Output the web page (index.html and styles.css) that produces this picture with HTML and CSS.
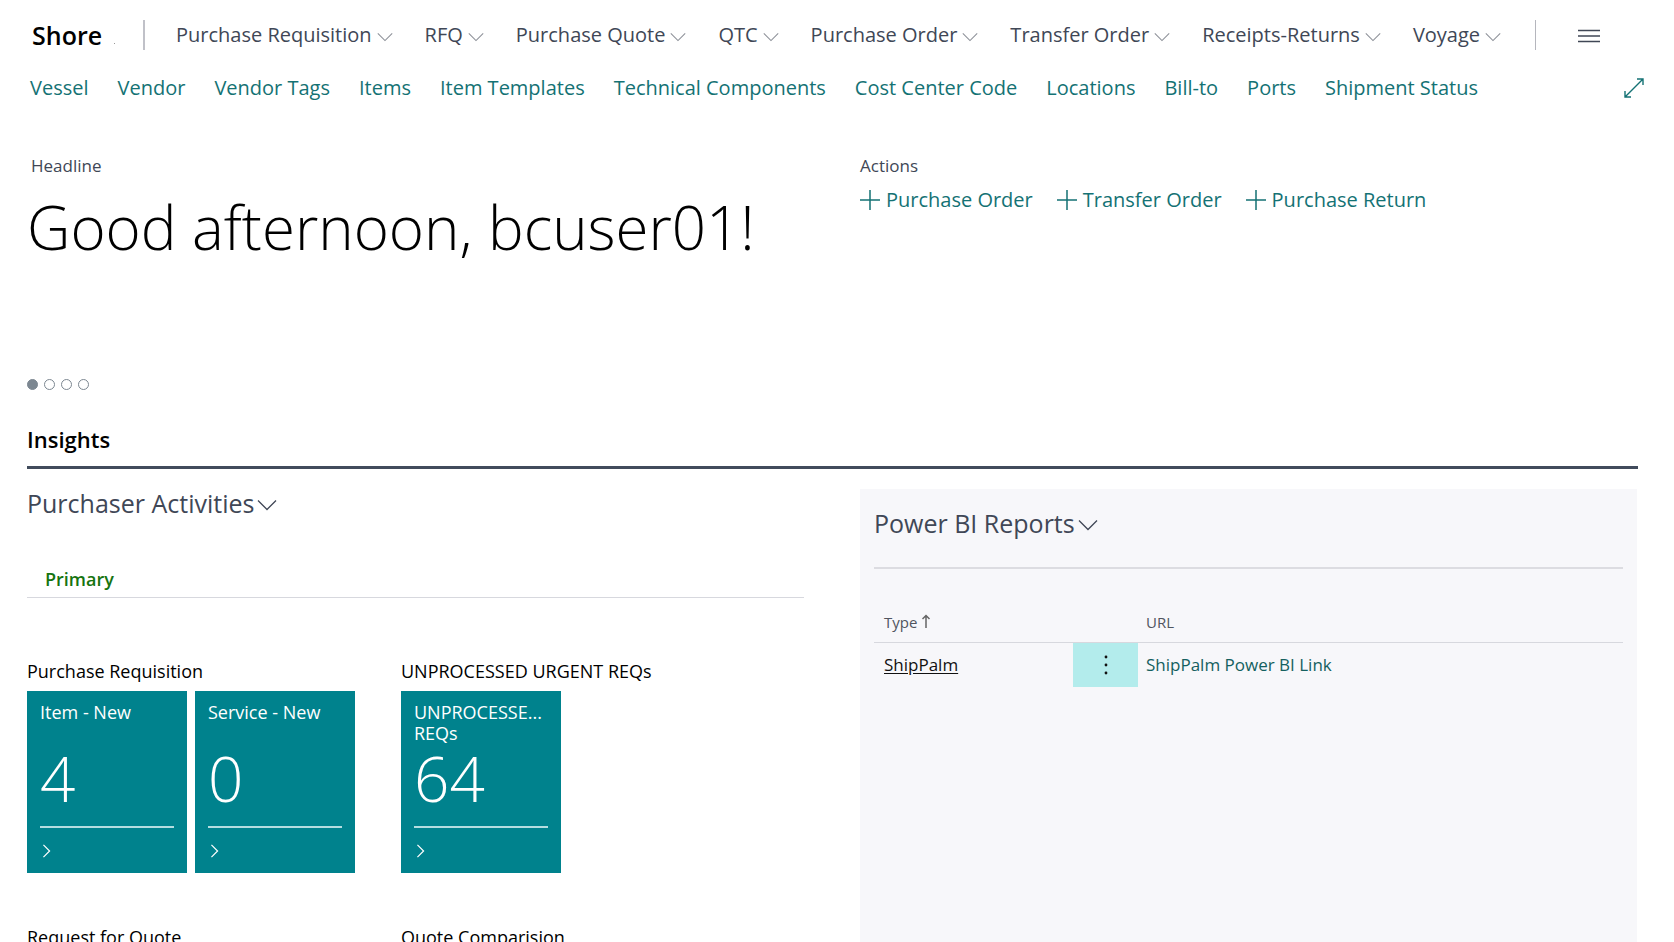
FILE: index.html
```html
<!DOCTYPE html>
<html lang="en">
<head>
<meta charset="utf-8">
<title>Shore - Role Center</title>
<link rel="stylesheet" href="styles.css">
</head>
<body>
<svg class="symbols" aria-hidden="true">
  <symbol id="chevron-down" viewBox="0 0 20 12"><path d="M1 1.5l9 9 9-9" fill="none" stroke="currentColor" stroke-width="1.3"/></symbol>
  <symbol id="chevron-right" viewBox="0 0 9 16"><path d="M1 1l7 7-7 7" fill="none" stroke="currentColor" stroke-width="1.4"/></symbol>
  <symbol id="plus" viewBox="0 0 20 20"><path d="M10 0v20M0 10h20" fill="none" stroke="currentColor" stroke-width="1.5"/></symbol>
</svg>
<header class="top">
  <nav class="menu" aria-label="Main">
    <div class="brand"><a class="brand-name" href="#">Shore</a><span class="brand-dot"></span></div>
    <div class="menu-items">
      <button class="menu-item" type="button">Purchase Requisition<svg class="menu-chevron"><use href="#chevron-down"/></svg></button>
      <button class="menu-item" type="button">RFQ<svg class="menu-chevron"><use href="#chevron-down"/></svg></button>
      <button class="menu-item" type="button">Purchase Quote<svg class="menu-chevron"><use href="#chevron-down"/></svg></button>
      <button class="menu-item" type="button">QTC<svg class="menu-chevron"><use href="#chevron-down"/></svg></button>
      <button class="menu-item" type="button">Purchase Order<svg class="menu-chevron"><use href="#chevron-down"/></svg></button>
      <button class="menu-item" type="button">Transfer Order<svg class="menu-chevron"><use href="#chevron-down"/></svg></button>
      <button class="menu-item" type="button">Receipts-Returns<svg class="menu-chevron"><use href="#chevron-down"/></svg></button>
      <button class="menu-item" type="button">Voyage<svg class="menu-chevron"><use href="#chevron-down"/></svg></button>
    </div>
    <button class="burger" type="button" aria-label="More"><svg viewBox="0 0 22 14" width="22" height="14"><path d="M0 1.500h22M0 7h22M0 12.500h22" stroke="currentColor" stroke-width="1.6"/></svg></button>
  </nav>
  <nav class="links" aria-label="Lists">
    <a href="#">Vessel</a>
    <a href="#">Vendor</a>
    <a href="#">Vendor Tags</a>
    <a href="#">Items</a>
    <a href="#">Item Templates</a>
    <a href="#">Technical Components</a>
    <a href="#">Cost Center Code</a>
    <a href="#">Locations</a>
    <a href="#">Bill-to</a>
    <a href="#">Ports</a>
    <a href="#">Shipment Status</a>
    <button class="expand" type="button" aria-label="Expand"><svg viewBox="0 0 20 20" width="20" height="20"><path d="M1 19L19 1M13 1h6v6M1 13v6h6" fill="none" stroke="currentColor" stroke-width="1.4"/></svg></button>
  </nav>
</header>
<main class="content">
  <div class="columns intro">
    <section class="headline">
      <h2 class="label headline-label">Headline</h2>
      <h1 class="greeting">Good afternoon, bcuser01!</h1>
      <div class="dots">
        <button class="dot dot-current" type="button" aria-label="Headline 1"></button>
        <button class="dot" type="button" aria-label="Headline 2"></button>
        <button class="dot" type="button" aria-label="Headline 3"></button>
        <button class="dot" type="button" aria-label="Headline 4"></button>
      </div>
    </section>
    <section>
      <h2 class="label">Actions</h2>
      <div class="actions">
        <a class="action" href="#"><svg class="plus"><use href="#plus"/></svg>Purchase Order</a>
        <a class="action" href="#"><svg class="plus"><use href="#plus"/></svg>Transfer Order</a>
        <a class="action" href="#"><svg class="plus"><use href="#plus"/></svg>Purchase Return</a>
      </div>
    </section>
  </div>
  <h2 class="insights">Insights</h2>
  <div class="columns parts">
    <section class="activities">
      <h3><button class="part-title" type="button">Purchaser Activities<svg class="part-chevron"><use href="#chevron-down"/></svg></button></h3>
      <h4 class="primary">Primary</h4>
      <div class="groups">
        <section>
          <h5 class="group-title">Purchase Requisition</h5>
          <div class="tiles">
            <a class="tile" href="#"><span class="tile-name">Item - New</span><span class="tile-value">4</span><svg class="tile-arrow"><use href="#chevron-right"/></svg></a>
            <a class="tile" href="#"><span class="tile-name">Service - New</span><span class="tile-value">0</span><svg class="tile-arrow"><use href="#chevron-right"/></svg></a>
          </div>
        </section>
        <section>
          <h5 class="group-title">UNPROCESSED URGENT REQs</h5>
          <div class="tiles">
            <a class="tile" href="#"><span class="tile-name">UNPROCESSE...<br>REQs</span><span class="tile-value">64</span><svg class="tile-arrow"><use href="#chevron-right"/></svg></a>
          </div>
        </section>
        <section><h5 class="group-title">Request for Quote</h5></section>
        <section><h5 class="group-title">Quote Comparision</h5></section>
      </div>
    </section>
    <section class="reports">
      <h3><button class="part-title" type="button">Power BI Reports<svg class="part-chevron"><use href="#chevron-down"/></svg></button></h3>
      <table class="table">
        <thead>
          <tr><th class="col-type" scope="col">Type<svg class="sort" viewBox="0 0 10 14" width="10" height="14"><path d="M5 14V1.500M1.500 5L5 1.500 8.500 5" fill="none" stroke="currentColor" stroke-width="1.5"/></svg></th><th class="col-menu"></th><th scope="col">URL</th></tr>
        </thead>
        <tbody>
          <tr>
            <td class="col-type"><a class="type-link" href="#">ShipPalm</a></td>
            <td class="col-menu"><button class="row-menu" type="button" aria-label="Row options"><svg viewBox="0 0 4 20" width="4" height="20"><g fill="currentColor"><circle cx="2" cy="2" r="1.4"/><circle cx="2" cy="10" r="1.4"/><circle cx="2" cy="18" r="1.4"/></g></svg></button></td>
            <td><a class="url-link" href="#">ShipPalm Power BI Link</a></td>
          </tr>
        </tbody>
      </table>
    </section>
  </div>
</main>
</body>
</html>
```
FILE: styles.css
```css
:root {
  --ink: #404756;
  --teal: #147274;
  --tile: #00828d;
  --rule: #d7d8de;
}

* { box-sizing: border-box; }

body {
  display: flex;
  flex-direction: column;
  height: 100vh;
  margin: 0;
  overflow: hidden;
  background: #fff;
  color: #111;
  font-family: "Open Sans", "Noto Sans", sans-serif;
  font-size: 20px;
  font-weight: 400;
  line-height: 30px;
}

h1, h2, h3, h4, h5 { margin: 0; font: inherit; }
a { color: inherit; text-decoration: none; }
button {
  padding: 0;
  border: 0;
  background: none;
  color: inherit;
  font: inherit;
  cursor: pointer;
}
svg { display: block; flex: none; }
.symbols { position: absolute; width: 0; height: 0; }

.top { padding: 20px 30px 0; white-space: nowrap; }
.menu { display: flex; color: var(--ink); }
.brand {
  display: flex;
  align-items: center;
  width: 115px;
  padding-left: 2px;
  border-right: 2px solid #c0c1c8;
}
.brand-name { color: #000; font-size: 25px; font-weight: 600; }
.brand-dot { width: 1px; height: 1px; margin: 16px 0 0 12px; background: #999; }
.menu-items {
  display: flex;
  gap: 32px;
  padding: 0 34px 0 31px;
  border-right: 1px solid #b5b6bd;
}
.menu-item { display: flex; align-items: center; gap: 5px; }
.menu-chevron { width: 16px; height: 10px; margin-top: 4px; color: #8c9098; }
.burger { margin-left: 42px; padding-top: 2px; }

.links { display: flex; gap: 29px; margin-top: 23px; color: var(--teal); }
.expand { display: flex; align-items: center; margin-left: auto; }

.content { flex: 1; padding: 51px 36px 0 27px; }
.columns {
  display: grid;
  grid-template-columns: 1fr 1fr;
  column-gap: 56px;
  padding-right: 1px;
}
.intro { height: 270px; }
.headline { display: flex; flex-direction: column; }
.label { color: var(--ink); font-size: 17px; line-height: 24px; }
.headline-label { padding-left: 4px; }
.greeting {
  margin-top: 9px;
  color: #000;
  font-size: 60px;
  font-weight: 300;
  line-height: 80px;
  white-space: nowrap;
}
.dots { display: flex; gap: 6px; margin-top: 112px; }
.dot { width: 11px; height: 11px; border: 1px solid #7c8791; border-radius: 50%; }
.dot-current { background: #7c8791; }

.actions { display: flex; gap: 24px; margin-top: 7px; color: var(--teal); }
.action { display: flex; align-items: center; gap: 6px; }
.plus { width: 20px; height: 20px; }

.insights {
  padding-bottom: 12px;
  border-bottom: 3px solid #414b5c;
  color: #000;
  font-size: 22px;
  font-weight: 600;
}

.part-title {
  display: flex;
  align-items: center;
  gap: 3px;
  color: var(--ink);
  font-size: 25px;
  line-height: 34px;
}
.part-chevron { width: 20px; height: 12px; margin-top: 4px; }
.activities { padding-top: 17px; }
.primary {
  margin-top: 47px;
  padding: 0 18px 6px;
  border-bottom: 1px solid var(--rule);
  color: #16740f;
  font-size: 18px;
  font-weight: 600;
  line-height: 24px;
}
.groups {
  display: grid;
  grid-template-columns: max-content max-content;
  gap: 52px 46px;
  margin-top: 61px;
}
.group-title { color: #000; font-size: 18px; line-height: 24px; }
.tiles { display: flex; gap: 8px; margin-top: 8px; }
.tile {
  display: flex;
  flex-direction: column;
  width: 160px;
  height: 182px;
  padding: 11px 13px;
  background: var(--tile);
  color: #fff;
}
.tile-name { height: 42px; font-size: 18px; line-height: 21px; }
.tile-value {
  padding: 3px 0 17px;
  border-bottom: 2px solid #b4dde0;
  font-size: 62px;
  font-weight: 300;
  line-height: 62px;
}
.tile-arrow { width: 9px; height: 14px; margin: 16px 0 0 2px; }

.reports {
  align-self: start;
  min-height: 480px;
  margin-top: 20px;
  padding: 17px 14px 0;
  background: #f7f7fa;
}
.table {
  width: 100%;
  margin-top: 27px;
  border-top: 2px solid #dcdce1;
  border-collapse: separate;
  border-spacing: 0;
  table-layout: fixed;
  text-align: left;
}
th {
  padding: 41px 8px 8px;
  border-bottom: 1px solid var(--rule);
  color: #50555f;
  font-size: 15px;
  font-weight: 400;
  line-height: 24px;
}
td { height: 44px; padding: 0 8px; font-size: 17px; line-height: 24px; }
.col-type { width: 199px; padding-left: 10px; }
.col-menu { width: 65px; padding: 0; }
.sort { display: inline-block; margin-left: 4px; color: #666; }
.type-link { text-decoration: underline; text-underline-offset: 2px; }
.url-link { color: #14605f; }
.row-menu {
  display: flex;
  align-items: center;
  justify-content: center;
  width: 100%;
  height: 44px;
  background: #b3ecec;
}
```
